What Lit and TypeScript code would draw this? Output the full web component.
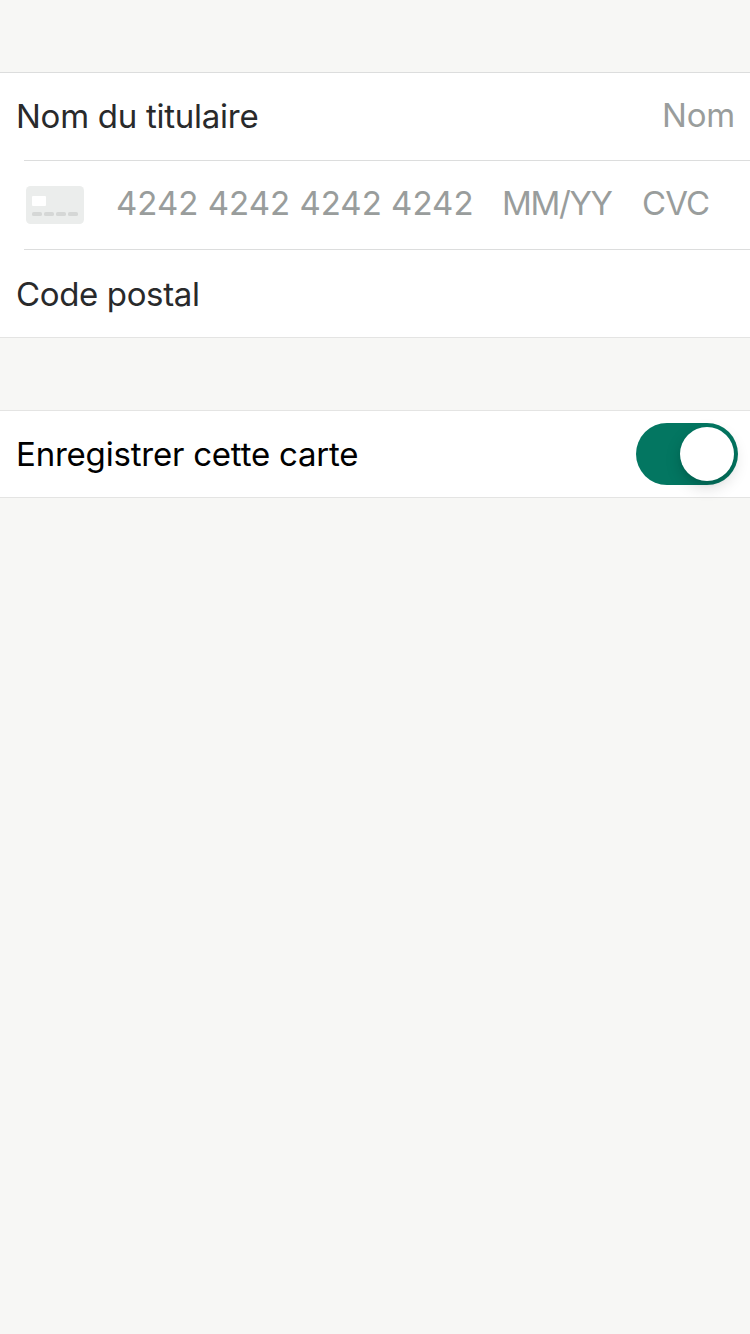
import { LitElement, html, css } from "lit";
import { customElement, property } from "lit/decorators.js";

@customElement("card-icon")
class CardIcon extends LitElement {
  static styles = css`
    :host { display: block; width: 58px; height: 38px; }
    svg { display: block; }
  `;
  render() {
    return html`<svg width="58" height="38" viewBox="0 0 58 38">
      <rect width="58" height="38" rx="4.5" fill="#ebedec" />
      <rect x="6" y="10" width="14" height="10" rx="1" fill="#fff" />
      <g fill="#d5d7d6">
        <rect x="6" y="26" width="10" height="4" rx="1.6" />
        <rect x="18" y="26" width="10" height="4" rx="1.6" />
        <rect x="30" y="26" width="10" height="4" rx="1.6" />
        <rect x="42" y="26" width="10" height="4" rx="1.6" />
      </g>
    </svg>`;
  }
}

@customElement("toggle-switch")
class ToggleSwitch extends LitElement {
  @property({ type: Boolean, reflect: true }) checked = false;
  static styles = css`
    :host {
      display: flex; box-sizing: border-box; width: 102px; height: 62px;
      padding: 4px; border-radius: 31px; background: #ddd;
    }
    :host([checked]) { background: #037661; justify-content: flex-end; }
    .knob {
      width: 54px; height: 54px; border-radius: 50%; background: #fff;
      box-shadow: 0 6px 16px rgba(0, 0, 0, 0.16), 0 4px 4px rgba(0, 0, 0, 0.05);
    }
  `;
  render() {
    return html`<div class="knob"></div>`;
  }
}

@customElement("app-root")
class AppRoot extends LitElement {
  static styles = css`
    :host {
      display: block; box-sizing: border-box; width: 750px; height: 1334px;
      padding-top: 72px; background: #f7f7f5; overflow: hidden;
      font-family: Inter, "Liberation Sans", sans-serif;
      font-size: 33px; line-height: 42px; color: #292a2b; white-space: nowrap;
    }
    .group { background: #fff; }
    .details { border-top: 1px solid #dcdddd; border-bottom: 1px solid #e4e4e3; }
    .save {
      margin-top: 72px; border-top: 1px solid #e4e4e3; border-bottom: 1px solid #e4e4e3;
      color: #000;
    }
    .row { display: flex; box-sizing: border-box; align-items: flex-start; padding-left: 16px; }
    .name { height: 87px; padding-top: 22px; padding-right: 15px; justify-content: space-between; }
    .number { height: 88px; padding-left: 26px; padding-top: 21px; }
    .postal { height: 87px; padding-top: 23px; }
    .toggle { height: 86px; padding: 12px 12px 0 16px; justify-content: space-between; }
    .divider { height: 1px; margin-left: 24px; background: #dcdddd; }
    .hint { color: #999d9c; }
    .holder { margin-top: -1px; letter-spacing: -0.2px; }
    card-icon { margin-top: 4px; }
    .pan { width: 386px; margin-left: 32px; letter-spacing: 0.01px; }
    .expiry { width: 140px; letter-spacing: -1.35px; }
    .cvc { letter-spacing: -0.9px; }
    .lbl-name { letter-spacing: -0.26px; }
    .lbl-postal { letter-spacing: -0.36px; }
    .lbl-save { padding-top: 10px; letter-spacing: -0.21px; }
  `;
  render() {
    return html`
      <section class="group details">
        <div class="row name">
          <span class="lbl-name">Nom du titulaire</span>
          <span class="hint holder">Nom</span>
        </div>
        <div class="divider"></div>
        <div class="row number">
          <card-icon></card-icon>
          <span class="hint pan">4242 4242 4242 4242</span>
          <span class="hint expiry">MM/YY</span>
          <span class="hint cvc">CVC</span>
        </div>
        <div class="divider"></div>
        <div class="row postal"><span class="lbl-postal">Code postal</span></div>
      </section>
      <section class="group save">
        <div class="row toggle">
          <span class="lbl-save">Enregistrer cette carte</span>
          <toggle-switch checked></toggle-switch>
        </div>
      </section>
    `;
  }
}
